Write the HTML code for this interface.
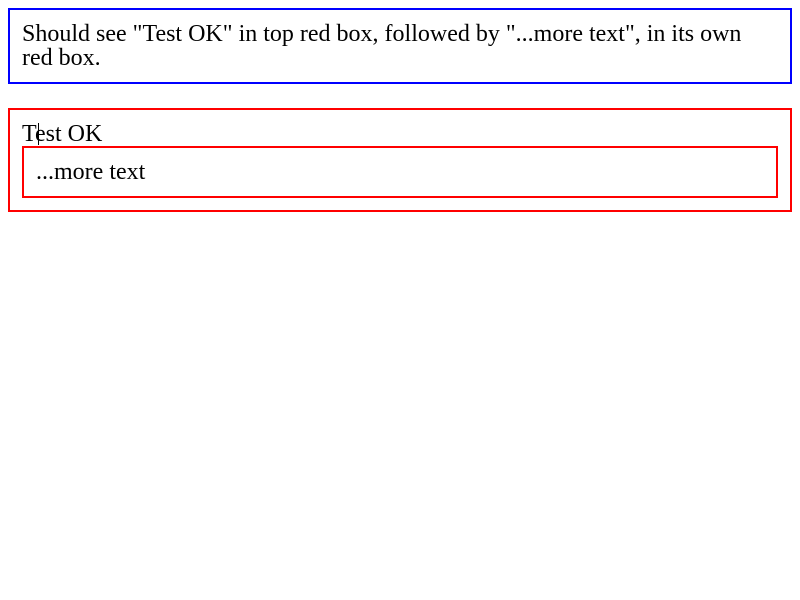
<!DOCTYPE html>
<html><head><style>
html,body{margin:0;padding:0;background:#fff}
body{padding:8px;font-family:"Liberation Serif",serif;font-size:24px;line-height:24px;color:#000}
.b{border:2px solid blue;padding:12px;height:48px}
.r{border:2px solid red;padding:12px;margin-top:24px;position:relative}
.i{border:2px solid red;padding:12px}
.caret{position:absolute;left:28px;top:13px;width:1px;height:22px;background:#000}
</style></head><body>
<div class="b">Should see "Test OK" in top red box, followed by "...more text", in its own red box.</div>
<div class="r"><span class="caret"></span>Test OK<div class="i">...more text</div></div>
</body></html>
